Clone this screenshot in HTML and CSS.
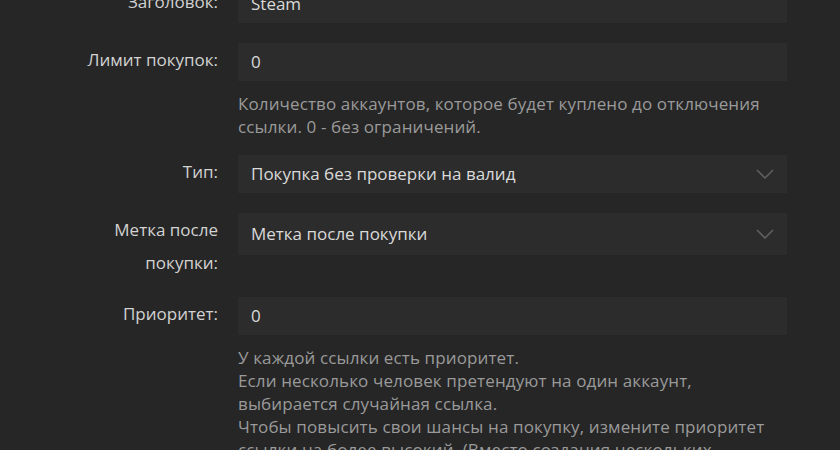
FILE: index.html
```html
<!DOCTYPE html>
<html lang="ru">
<head>
<meta charset="utf-8">
<link rel="stylesheet" href="styles.css">
</head>
<body>
<div class="form">
  <div class="row">
    <label class="label">Заголовок:</label>
    <div class="field"><div class="input">Steam</div></div>
  </div>
  <div class="row">
    <label class="label">Лимит покупок:</label>
    <div class="field">
      <div class="input">0</div>
      <p class="help">Количество аккаунтов, которое будет куплено до отключения ссылки. 0 - без ограничений.</p>
    </div>
  </div>
  <div class="row">
    <label class="label">Тип:</label>
    <div class="field">
      <div class="input select">Покупка без проверки на валид
        <svg class="chev" width="18" height="10" viewBox="0 0 18 10"><path d="M1 1 L9 9 L17 1" fill="none" stroke="#5e5e5e" stroke-width="1.6"/></svg>
      </div>
    </div>
  </div>
  <div class="row two-line">
    <label class="label">Метка после покупки:</label>
    <div class="field">
      <div class="input select tall">Метка после покупки
        <svg class="chev" width="18" height="10" viewBox="0 0 18 10"><path d="M1 1 L9 9 L17 1" fill="none" stroke="#5e5e5e" stroke-width="1.6"/></svg>
      </div>
    </div>
  </div>
  <div class="row">
    <label class="label">Приоритет:</label>
    <div class="field">
      <div class="input">0</div>
      <p class="help">У каждой ссылки есть приоритет.<br>Если несколько человек претендуют на один аккаунт, выбирается случайная ссылка.<br>Чтобы повысить свои шансы на покупку, измените приоритет ссылки на более высокий. (Вместо создания нескольких ссылок)</p>
    </div>
  </div>
</div>
</body>
</html>
```
FILE: styles.css
```css
html, body {
  margin: 0;
  padding: 0;
  background: #262626;
  overflow: hidden;
}
body {
  font-family: "Open Sans", "Noto Sans", sans-serif;
  font-size: 17px;
  color: #d6d6d6;
}
.form {
  margin-top: -15px;
  display: flex;
  flex-direction: column;
  gap: 20px;
}
.row {
  display: flex;
  align-items: flex-start;
}
.row.two-line {
  margin-bottom: -2px;
}
.label {
  width: 150px;
  margin-left: 68px;
  text-align: right;
  line-height: 33px;
  color: #d2d2d2;
}
.field {
  width: 549px;
  margin-left: 20px;
}
.input {
  height: 38px;
  box-sizing: border-box;
  background: #2c2c2c;
  padding: 0 13px 2px;
  display: flex;
  align-items: center;
  justify-content: space-between;
  color: #dadada;
}
.input.tall {
  height: 42px;
}
.chev {
  margin-top: 2px;
}
.help {
  margin: 11px 0 -3px;
  padding-right: 12px;
  line-height: 23px;
  letter-spacing: 0.12px;
  color: #9a9a9a;
}
```
